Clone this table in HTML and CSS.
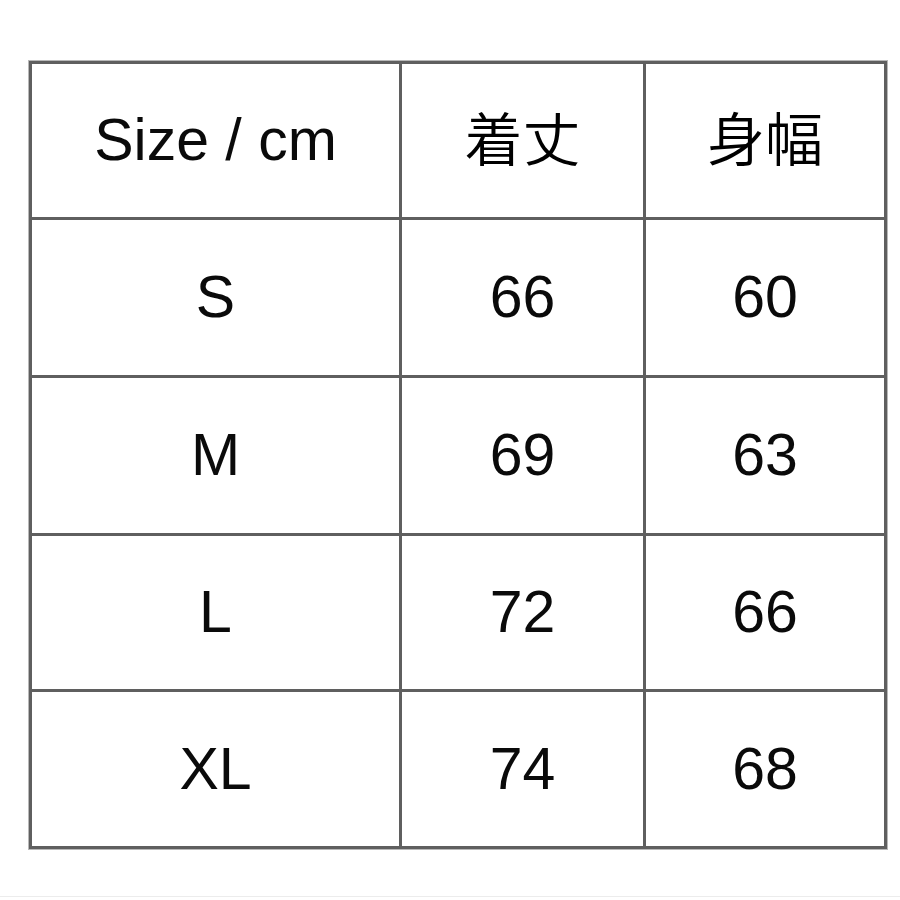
FILE: index.html
```html
<!DOCTYPE html>
<html lang="ja">
<head>
<meta charset="utf-8">
<title>Size chart</title>
<link rel="stylesheet" href="styles.css">
</head>
<body>
<div class="chart">
  <div class="cell">Size / cm</div>
  <div class="cell cjk">着丈</div>
  <div class="cell cjk">身幅</div>
  <div class="cell">S</div>
  <div class="cell">66</div>
  <div class="cell">60</div>
  <div class="cell">M</div>
  <div class="cell">69</div>
  <div class="cell">63</div>
  <div class="cell">L</div>
  <div class="cell">72</div>
  <div class="cell">66</div>
  <div class="cell">XL</div>
  <div class="cell">74</div>
  <div class="cell">68</div>
</div>
<div class="rule"></div>
</body>
</html>
```
FILE: styles.css
```css
html, body {
  margin: 0;
  padding: 0;
  background: #ffffff;
}
body {
  width: 900px;
  height: 900px;
  overflow: hidden;
  font-family: "Liberation Sans", Arial, "Noto Sans CJK JP", sans-serif;
}
.chart {
  margin: 61px 0 0 29px;
  width: 852px;
  padding: 3px;
  background: #5f5f5f;
  display: grid;
  grid-template-columns: 367px 241px 238px;
  grid-template-rows: 153px 155px 155px 153px 154px;
  gap: 3px;
  box-shadow: 0 0 0 1px #b8b8b8;
}
.cell {
  background: #ffffff;
  display: flex;
  align-items: center;
  justify-content: center;
  font-size: 59px;
  color: #0a0a0a;
  line-height: 1;
}
.cjk {
  font-family: "Noto Sans CJK JP", sans-serif;
  font-weight: 350;
  font-size: 58px;
  color: #000000;
  padding-bottom: 10px;
}
.rule {
  margin-top: 47px;
  height: 1px;
  background: #ececec;
}
```
